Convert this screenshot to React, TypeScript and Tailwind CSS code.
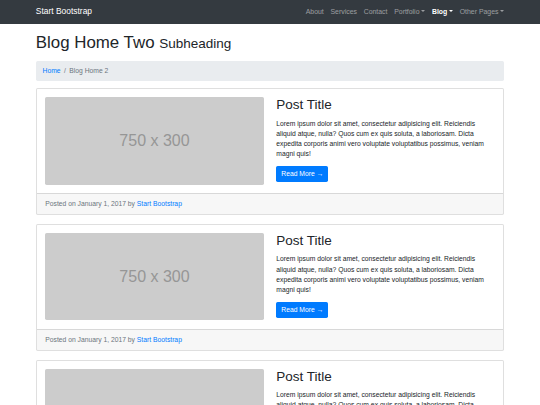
import React from 'react';

const navLinks = [
  { label: 'About' },
  { label: 'Services' },
  { label: 'Contact' },
  { label: 'Portfolio', dropdown: true },
  { label: 'Blog', dropdown: true, active: true },
  { label: 'Other Pages', dropdown: true },
];

const lorem =
  'Lorem ipsum dolor sit amet, consectetur adipisicing elit. Reiciendis aliquid atque, nulla? Quos cum ex quis soluta, a laboriosam. Dicta expedita corporis animi vero voluptate voluptatibus possimus, veniam magni quis!';

function Caret() {
  return (
    <span className="inline-block ml-[1.72px] align-[1.72px] w-0 h-0 border-t-[2.03px] border-t-current border-x-[2.03px] border-x-transparent" />
  );
}

function Navbar() {
  return (
    <nav className="bg-[#343a40] h-[23.6px]">
      <div className="w-[468.3px] mx-auto h-full flex items-center justify-between">
        <a className="text-white text-[8.44px] leading-[12.66px]">Start Bootstrap</a>
        <ul className="flex items-center -mr-[3.375px]">
          {navLinks.map((l) => (
            <li key={l.label}>
              <a
                className={`block px-[3.375px] py-[3.375px] text-[6.9px] leading-[10.125px] ${
                  l.active ? 'text-white font-bold' : 'text-white/50'
                }`}
              >
                {l.label}
                {l.dropdown && <Caret />}
              </a>
            </li>
          ))}
        </ul>
      </div>
    </nav>
  );
}

function Placeholder() {
  return (
    <div className="w-full aspect-[750/300] bg-[#cccccc] rounded-[1.69px] flex items-center justify-center">
      <span className="text-[#969696] text-[16px] leading-none">750 x 300</span>
    </div>
  );
}

function PostCard() {
  return (
    <div className="border border-black/[0.125] rounded-[1.69px] mb-[8.4px] bg-white">
      <div className="p-[8.44px] grid grid-cols-2 gap-x-[12.66px] items-start">
        <Placeholder />
        <div className="text-[6.75px] leading-[10.125px]">
          <h2 className="text-[13.5px] leading-[16.2px] mb-[5.06px]">Post Title</h2>
          <p className="mb-[6.75px]">{lorem}</p>
          <a className="block w-fit bg-[#007bff] text-white px-[5.06px] py-[2.95px] rounded-[1.69px]">
            Read More &rarr;
          </a>
        </div>
      </div>
      <div className="border-t border-black/[0.125] bg-black/[0.03] px-[8.44px] py-[5.06px] text-[6.75px] leading-[10.125px] text-[#6c757d]">
        Posted on January 1, 2017 by <a className="text-[#007bff]">Start Bootstrap</a>
      </div>
    </div>
  );
}

export default function App() {
  return (
    <div className="min-h-screen bg-white text-[#212529] font-['Liberation_Sans',Arial,sans-serif]">
      <Navbar />
      <div className="w-[468.3px] mx-auto">
        <h1 className="mt-[9.3px] mb-[6.75px] text-[16.875px] leading-[20.25px] font-normal">
          Blog Home Two <small className="text-[80%]">Subheading</small>
        </h1>
        <ol className="flex bg-[#e9ecef] rounded-[1.69px] px-[6.75px] py-[5.06px] mb-[6.75px] text-[6.75px] leading-[10.125px]">
          <li>
            <a className="text-[#007bff]">Home</a>
          </li>
          <li className="text-[#6c757d] pl-[3.375px]">
            <span className="pr-[3.375px]">/</span>Blog Home 2
          </li>
        </ol>
        <PostCard />
        <PostCard />
        <PostCard />
      </div>
    </div>
  );
}
